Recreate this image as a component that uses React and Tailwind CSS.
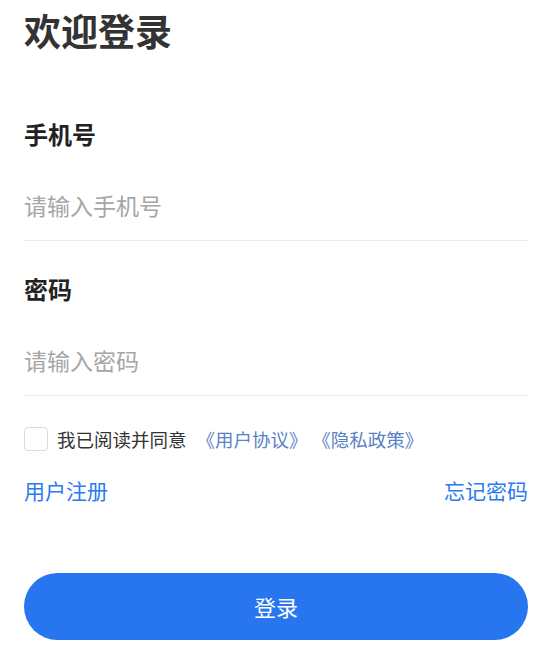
export default function App() {
  const font = { fontFamily: '"Noto Sans CJK SC", "Noto Sans", sans-serif' };
  return (
    <div className="w-[552px] h-[659px] bg-white px-6 overflow-hidden" style={font}>
      <h1 className="pt-[8px] text-[37px] leading-[44px] font-bold text-[#333333]">欢迎登录</h1>

      <div className="mt-[66px] h-8 text-[24px] leading-8 font-bold text-[#222222]">手机号</div>
      <div className="pt-[40px] pb-[20px] border-b border-[#ececec]">
        <input
          className="block w-full h-[30px] text-[23px] leading-[30px] outline-none placeholder:text-[#a6a6a6] text-[#333]"
          placeholder="请输入手机号"
        />
      </div>

      <div className="mt-[32px] h-8 text-[24px] leading-8 font-bold text-[#222222]">密码</div>
      <div className="pt-[40px] pb-[20px] border-b border-[#ececec]">
        <input
          type="password"
          className="block w-full h-[30px] text-[23px] leading-[30px] outline-none placeholder:text-[#a6a6a6] text-[#333]"
          placeholder="请输入密码"
        />
      </div>

      <div className="mt-[31px] h-6 flex items-center">
        <div className="w-6 h-6 rounded-[4px] border border-[#dcdcdc] bg-white shrink-0"></div>
        <div className="ml-[9px] text-[18.5px] leading-6 text-[#333333] whitespace-nowrap">
          我已阅读并同意
          <span className="ml-[10px] text-[#5a80c6]">《用户协议》</span>
          <span className="ml-[14px] text-[#5a80c6]">《隐私政策》</span>
        </div>
      </div>

      <div className="mt-[25px] h-7 flex items-center justify-between text-[21px] leading-7 text-[#2b7af0]">
        <span>用户注册</span>
        <span>忘记密码</span>
      </div>

      <button className="mt-[69px] w-full h-[67px] rounded-full bg-[#2776f0] text-white text-[22px] flex items-center justify-center">
        登录
      </button>
    </div>
  );
}
